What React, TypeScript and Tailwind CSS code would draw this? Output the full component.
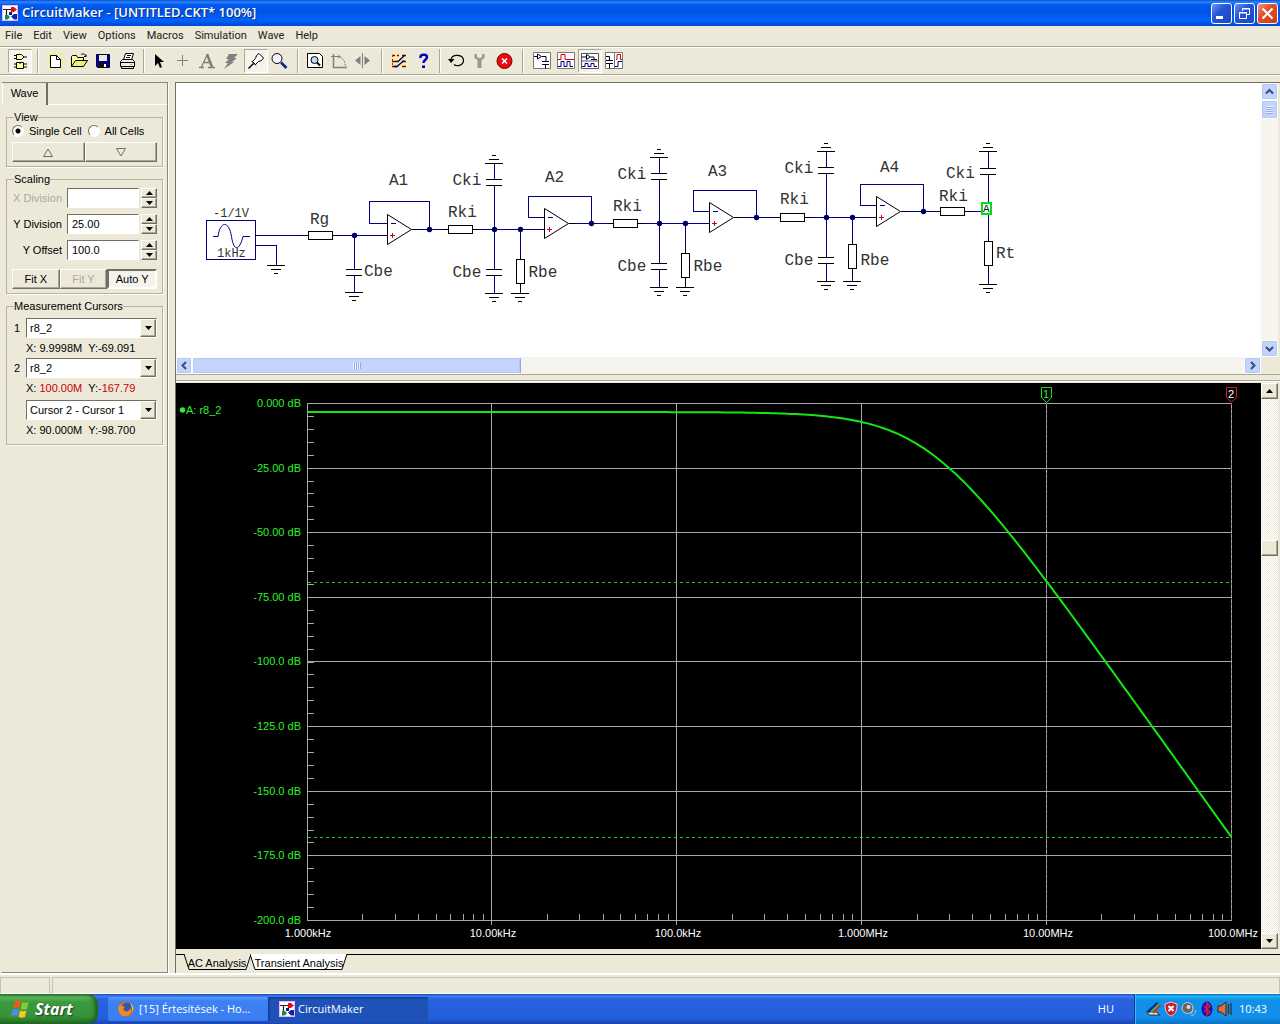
import type { ReactNode } from "react";

const SANS = "font-['Liberation_Sans',Arial,sans-serif]";
const raised = "border border-t-white border-l-white border-r-[#716f64] border-b-[#716f64] shadow-[inset_-1px_-1px_0_#aca899] bg-[#ece9d8]";
const sunken = "border border-t-[#716f64] border-l-[#716f64] border-r-white border-b-white";

const AppIcon = () => (
  <svg width="16" height="16" viewBox="0 0 16 16" className="shrink-0">
    <rect width="16" height="16" fill="#f8b0f0" />
    <rect x="1" y="1" width="14" height="14" fill="#fff" />
    <path d="M1 4.500H9M4.500 4V12M9.500 5V9" stroke="#222" strokeWidth="1.200" fill="none" />
    <path d="M9 2h3l3 2.500-3 2.500H9z" fill="#d81020" />
    <path d="M7 7h3v3H7z" fill="#102070" />
    <path d="M15 9h-3l-3 2.500 3 3h3z" fill="#1020b0" />
    <path d="M3 10h3l2 2-2 2.500H3z" fill="#109050" />
  </svg>
);

/* ---------- toolbar ---------- */

const Sep = ({ className = "w-3" }: { className?: string }) => (
  <div className={`${className} flex justify-center`}>
    <div className="h-6 w-[2px] border-l border-[#aca899] bg-white" />
  </div>
);

const Tool = ({ label, pressed, children }: { label: string; pressed?: boolean; children: ReactNode }) => (
  <button
    aria-label={label}
    className={`flex h-6 w-6 items-center justify-center ${pressed ? "border border-t-[#aca899] border-l-[#aca899] border-r-white border-b-white bg-[#f5f3ec]" : ""}`}
  >
    <svg width="18" height="18" viewBox="0 0 18 18" fill="none" stroke="#000" className="shrink-0">
      {children}
    </svg>
  </button>
);

const Toolbar = () => (
  <div className="flex h-7 items-center border-t border-[#aca899] pl-2 shadow-[inset_0_1px_0_#fff]">
    <Tool label="Parts" pressed>
      <path d="M5.500 2.500h5l2.500 2.500-2.500 2.500h-5zM3 3.500h2M3 6.500h2M13 5h3" fill="#ffffb0" />
      <path d="M5.500 10.500h7v6h-7zM3 12h2M3 15h2M13 12h3M13 15h3M8 10.500l1 1 1-1" fill="#ffff90" />
    </Tool>
    <Sep />
    <Tool label="New">
      <path d="M1 3l3 3M8 0v3M15 1l-3 3M0 9h3M15 11h3M2 16l2-2M14 15l2 2" stroke="#f6f25a" strokeWidth="2" />
      <path d="M3.500 3.500h6l4 4v8h-10z" fill="#fff" />
      <path d="M9.500 3.500v4h4" />
    </Tool>
    <Tool label="Open">
      <path d="M.5 14.500v-10l1-1h4l1 2h6v3" fill="#ffff99" />
      <path d="M.5 14.500l4-6h12l-4 6z" fill="#f0ec80" />
      <path d="M10 2.500c2-1 4-1 5 2m0 0v-2m0 2h-2" />
    </Tool>
    <Tool label="Save">
      <path d="M1.500 2.500h13v13h-12l-1-1z" fill="#000090" stroke="#00004a" />
      <path d="M4 3h8v6H4z" fill="#ece9d8" stroke="none" />
      <path d="M4 11h8v5H4z" fill="#111" stroke="none" />
      <path d="M9 12h2v3H9z" fill="#fff" stroke="none" />
    </Tool>
    <Tool label="Print">
      <path d="M4.500 8l2-6.500h8l-2 6.500" fill="#fff" />
      <path d="M8 3.500h4M7 5.500h4" />
      <path d="M1.500 9.500l2-2h10l2 2v5h-14z" fill="#f0f0ea" />
      <path d="M1.500 10.500h14M2.500 14.500h12v2h-12z" fill="#ddd" />
      <path d="M11 12.500h2" stroke="#d0c000" />
    </Tool>
    <Sep className="w-2" />
    <Tool label="Arrow">
      <path d="M4 2v12l3-3 2 5 2-1-2-5h4z" fill="#000" stroke="none" />
    </Tool>
    <Tool label="Wire">
      <path d="M7.500 3v11M2 8.500h11" stroke="#808080" />
    </Tool>
    <Tool label="Text">
      <path d="M0 15.500h5M9 15.500h7M2.500 15L8 3M5 10.500h6" stroke="#808080" strokeWidth="1.300" />
      <path d="M8 2l5 13" stroke="#808080" strokeWidth="2.600" />
    </Tool>
    <Tool label="Delete">
      <path d="M6 2h9l-4 4h3l-5 4h2L1 17l4-6H2l4-4H3z" fill="#808080" stroke="none" />
    </Tool>
    <Tool label="Probe" pressed>
      <path d="M1.500 16.500l5-5" strokeWidth="1.500" />
      <path d="M5.500 9.500l3-3 1-3 2.500-2 4.500 4.500-2 2.500-3 1-3 3z" fill="#fff" />
      <path d="M4.500 9l4.500 4.500" />
    </Tool>
    <Tool label="Zoom">
      <circle cx="6" cy="6.500" r="5" fill="#f4f4ff" />
      <path d="M10 10.500l5.500 5.500" stroke="#1020a0" strokeWidth="2.600" />
    </Tool>
    <Sep />
    <Tool label="Find">
      <path d="M.5 1.500h12l3 3v11H.5z" fill="#fff" />
      <circle cx="7.500" cy="8" r="3.500" fill="#bde" />
      <path d="M10 10.500l3 3" strokeWidth="2" />
    </Tool>
    <Tool label="Rotate">
      <path d="M2.500 2v13.500H16" stroke="#808080" strokeWidth="1.500" />
      <path d="M0 4.500h9l-2-2m2 2l-2 2" stroke="#808080" />
      <path d="M9 5c4 2 5 5 5.500 10" stroke="#808080" strokeDasharray="2 1" />
    </Tool>
    <Tool label="Mirror">
      <path d="M7.500 1v15" stroke="#808080" />
      <path d="M5.500 4v9L0 8.500zM9.500 4v9L15 8.500z" fill="#808080" stroke="none" />
    </Tool>
    <Sep />
    <Tool label="Digital options">
      <path d="M1 2h14v14H1z" fill="#f8f0a0" stroke="none" />
      <path d="M1 3.500h3M6 3.500h2M1 9.500h3M1 14.500h6M11 3.500h4M11 9.500h4M11 14.500h4" stroke="#900000" strokeWidth="1.600" />
      <path d="M1.500 3v12" stroke="#c02020" strokeDasharray="2 2" />
      <path d="M4 9.500h3l7-6.500M3 14.500h3l7-6" stroke="#000090" strokeWidth="1.400" />
    </Tool>
    <Tool label="Help">
      <path d="M5.500 6V4.500C6 2 12 2 12 5c0 3-3.500 2.500-3.500 6" stroke="#0000c0" strokeWidth="2.400" />
      <path d="M7 13.500h3v2.500H7z" fill="#0000c0" stroke="none" />
    </Tool>
    <Sep className="w-2" />
    <Tool label="Reset">
      <path d="M4 7.500c1-6 12.500-5.500 12.500 1 0 5-7 6.500-9.500 4" strokeWidth="1.200" />
      <path d="M1 7h6.500L4 11z" fill="#000" stroke="none" />
    </Tool>
    <Tool label="Step">
      <path d="M3.500 2v4l3 2v8h4V8l3-2V2h-2.500v3l-1.500 1H8L6 5V2z" fill="#9a9888" stroke="none" />
    </Tool>
    <Tool label="Stop">
      <circle cx="9.500" cy="9" r="7.500" fill="#e80c10" stroke="#700" />
      <path d="M7 6.500l5 5m0-5l-5 5" stroke="#fff" strokeWidth="1.600" />
    </Tool>
    <Sep className="w-[14px]" />
    <Tool label="Schematic view">
      <path d="M.5 .5h17v16H.5z" fill="#fff" stroke="#777" />
      <path d="M1 4.500h3M4.500 2v5l4-2.500zM9 4.500h4v5M9 9.500h7M9 12.500h7M12.500 12.500v4" stroke="#002" />
    </Tool>
    <Tool label="Wave view">
      <path d="M.5 .5h17v16H.5z" fill="#fff" stroke="#777" />
      <path d="M1 7.500h3v-5h4v5h9" stroke="#d00000" />
      <path d="M1 14.500h3v-5h3v5h3v-5h3v5h3" stroke="#000080" />
    </Tool>
    <Tool label="Split horizontal" pressed>
      <path d="M.5 1.500h17v15H.5zM.5 9h17" fill="#fff" stroke="#555" />
      <path d="M1 5h4M5.500 2.500v5l4-2.500zM10 5h3v2M10 7.500h6" stroke="#002" />
      <path d="M1 14.500h3v-3h3v3h3v-3h3v3h3" stroke="#000080" />
    </Tool>
    <Tool label="Split vertical">
      <path d="M.5 .5h17v16H.5zM9.500 1v16" fill="#fff" stroke="#777" />
      <path d="M1 4.500h3.500v4M1 8.500h7M1 11.500h7M4.500 11.500v5" stroke="#002" />
      <path d="M11 7.500h1v-5h3.500v5h1.500" stroke="#d00000" />
      <path d="M10 14.500h3v-5h4" stroke="#000080" />
    </Tool>
  </div>
);

/* ---------- left panel ---------- */

const Group = ({ title, children }: { title: string; children: ReactNode }) => (
  <fieldset className="min-w-0 border border-[#b5b2a2] px-[5px] pb-1 shadow-[1px_1px_0_#fff]">
    <legend className="ml-[2px] text-[11px] leading-3">{title}</legend>
    {children}
  </fieldset>
);

const Spin = ({ id, label, value, disabled }: { id: string; label: string; value: string; disabled?: boolean }) => (
  <div className="flex h-[26px] items-center">
    <label htmlFor={id} className={`w-[50px] shrink-0 whitespace-nowrap text-right ${disabled ? "text-[#aca899]" : ""}`}>
      {label}
    </label>
    <input id={id} defaultValue={value} disabled={disabled} className={`ml-[5px] h-5 w-0 flex-1 bg-white px-1 ${sunken}`} />
    <div className="ml-[2px] flex h-5 w-4 flex-col">
      <button aria-label={`${label} up`} className={`flex flex-1 items-center justify-center ${raised}`}>
        <svg width="7" height="4"><path d="M0 4L3.500 0 7 4z" /></svg>
      </button>
      <button aria-label={`${label} down`} className={`flex flex-1 items-center justify-center ${raised}`}>
        <svg width="7" height="4"><path d="M0 0L3.500 4 7 0z" /></svg>
      </button>
    </div>
  </div>
);

const Combo = ({ n, value, children }: { n: string; value: string; children: ReactNode }) => (
  <div className="flex">
    <label htmlFor={`cursor${n}`} className="w-[14px] shrink-0 pl-[2px] leading-5">{n}</label>
    <div className="min-w-0 flex-1">
      <div className="relative">
        <select
          id={`cursor${n}`}
          aria-label={n ? undefined : "Difference"}
          className={`block h-5 w-full appearance-none bg-white pl-[3px] text-[11px] ${sunken}`}
        >
          <option>{value}</option>
        </select>
        <span className={`pointer-events-none absolute top-[1px] right-[1px] flex h-[18px] w-4 items-center justify-center ${raised}`}>
          <svg width="7" height="4"><path d="M0 0L3.500 4 7 0z" /></svg>
        </span>
      </div>
      <div className="h-5 whitespace-pre leading-5">{children}</div>
    </div>
  </div>
);

const btn = `h-5 flex-1 ${raised}`;

const SidePanel = () => (
  <aside className="ml-[2px] flex w-[166px] shrink-0 flex-col border-t border-r border-b border-[#8b8878] text-[11px] leading-3 shadow-[1px_1px_0_#fff]">
    <div className="flex h-[22px]">
      <button className="w-[46px] border-r-2 border-[#716f64] border-l border-l-white pb-[2px]">Wave</button>
      <div className="flex-1 border-b border-white" />
    </div>
    <div className="flex flex-col gap-[6px] px-1 pt-[6px]">
      <Group title="View">
        <div className="flex h-4 items-center gap-[6px] whitespace-nowrap">
          {["Single Cell", "All Cells"].map((t, i) => (
            <label key={t} className="flex items-center gap-[5px]">
              <input
                type="radio"
                name="view"
                defaultChecked={i === 0}
                className="h-3 w-3 appearance-none rounded-full border border-t-[#716f64] border-l-[#716f64] border-r-white border-b-white bg-white checked:bg-[radial-gradient(circle,#000_2px,#fff_3px)]"
              />
              {t}
            </label>
          ))}
        </div>
        <div className="mt-[3px] flex">
          <button aria-label="Previous cell" className={`flex items-center justify-center ${btn}`}>
            <svg width="10" height="9" fill="none" stroke="#716f64"><path d="M.5 8.500h9L5 1z" /></svg>
          </button>
          <button aria-label="Next cell" className={`flex items-center justify-center ${btn}`}>
            <svg width="10" height="9" fill="none" stroke="#716f64"><path d="M.5.5h9L5 8z" /></svg>
          </button>
        </div>
      </Group>
      <Group title="Scaling">
        <Spin id="xdiv" label="X Division" value="" disabled />
        <Spin id="ydiv" label="Y Division" value="25.00" />
        <Spin id="yoff" label="Y Offset" value="100.0" />
        <div className="mt-[6px] flex">
          <button className={btn}>Fit X</button>
          <button disabled className={`text-[#aca899] ${btn}`}>Fit Y</button>
          <button className="h-5 flex-1 border-2 border-t-[#716f64] border-l-[#716f64] border-r-white border-b-white bg-[#f5f3ec]">Auto Y</button>
        </div>
      </Group>
      <Group title="Measurement Cursors">
        <div className="pt-[6px]">
          <Combo n="1" value="r8_2">X: 9.9998M  Y:-69.091</Combo>
          <Combo n="2" value="r8_2">
            X: <span className="text-[#c8000a]">100.00M</span>  Y:<span className="text-[#c8000a]">-167.79</span>
          </Combo>
          <div className="pt-[2px]">
            <Combo n="" value="Cursor 2 - Cursor 1">X: 90.000M  Y:-98.700</Combo>
          </div>
        </div>
      </Group>
    </div>
  </aside>
);

/* ---------- schematic ---------- */

const WIRE = "#000080";

// Ground symbol, dir = 1 points down, -1 points up
const Ground = ({ x, y, dir = 1 }: { x: number; y: number; dir?: number }) => (
  <path d={`M${x - 9.5} ${y}h18M${x - 5.5} ${y + 4 * dir}h10M${x - 2.5} ${y + 8 * dir}h4`} stroke="#000" />
);

const Plates = ({ x, y }: { x: number; y: number }) => (
  <>
    <rect x={x - 2} y={y} width="4" height="6" fill="#fff" stroke="none" />
    <path d={`M${x - 8.5} ${y}h16M${x - 8.5} ${y + 6}h16`} stroke="#000" />
  </>
);

const ResH = ({ x, y }: { x: number; y: number }) => (
  <path d={`M${x - 6} ${y}h6m24 0h6M${x} ${y - 4}h24v8h-24z`} fill="#fff" stroke="#000" />
);

const ResV = ({ x, y }: { x: number; y: number }) => (
  <path d={`M${x} ${y - 5}v5m0 24v6M${x - 4} ${y}h8v24h-8z`} fill="#fff" stroke="#000" />
);

const Dot = ({ x, y }: { x: number; y: number }) => (
  <circle cx={x} cy={y} r="2.700" fill="#000060" stroke="none" shapeRendering="auto" />
);

const Label = ({ x, y, small, children }: { x: number; y: number; small?: boolean; children: string }) => (
  <text x={x} y={y} fontSize={small ? 12 : 16} fill="#333" stroke="none">{children}</text>
);

type OpAmpProps = { x: number; y: number; left: number; right: number; name: string; nx: number; ny: number };

// x is the left side of the triangle, y the non inverting input
const OpAmp = ({ x, y, left, right, name, nx, ny }: OpAmpProps) => {
  const top = name === "A1" ? y - 34 : y - 33;
  return (
    <>
      <path d={`M${x} ${y - 12}H${left}V${top}H${right}V${y - 6}`} stroke={WIRE} />
      <path d={`M${x} ${y - 21}v30l24 -15z`} fill="#fff" stroke="#000" shapeRendering="auto" />
      <path d={`M${x + 24} ${y - 6}h6`} stroke="#000" />
      <path d={`M${x + 3} ${y - 12}h5`} stroke={WIRE} />
      <path d={`M${x + 2.5} ${y}h5M${x + 5} ${y - 2.5}v5`} stroke="#d00020" />
      <Dot x={right} y={y - 6} />
      <Label x={nx} y={ny}>{name}</Label>
    </>
  );
};

const BusNode = ({ x, y }: { x: number; y: number }) => (
  <>
    <path d={`M${x} ${y - 66}V${y + 64}M${x + 26} ${y}v64`} stroke={WIRE} />
    <Plates x={x} y={y - 50} />
    <Plates x={x} y={y + 40} />
    <Ground x={x} y={y - 66} dir={-1} />
    <Ground x={x} y={y + 64} />
    <ResV x={x + 26} y={y === 217.5 ? y + 27 : y + 30} />
    <Ground x={x + 26} y={y + 64} />
    <Dot x={x} y={y} />
    <Dot x={x + 26} y={y} />
    <Label x={x - 42} y={y - 45}>Cki</Label>
    <Label x={x - 42} y={y + 47}>Cbe</Label>
    <Label x={x + 34} y={y + 47}>Rbe</Label>
  </>
);

const Schematic = () => (
  <svg width="1085" height="274" viewBox="176 83 1085 274" fill="none" shapeRendering="crispEdges" className="shrink-0 font-['Liberation_Mono',monospace]">
    <rect x="206.500" y="220.500" width="49" height="39" stroke={WIRE} />
    <path d="M213 236.500h5c2-16 11-16 13.500 0s8 14 11.500 0h7" stroke={WIRE} shapeRendering="auto" />
    <Label x={213} y={217} small>-1/1V</Label>
    <Label x={217} y={257} small>1kHz</Label>
    <path d="M256 235.500H387M256 245.500h20.500v20M354.500 235.500v57" stroke={WIRE} />
    <path d="M412 229.500H544M569 223.500H709M734 217.500H876M901 211.500H982M988.500 151.500v133" stroke={WIRE} />
    <Ground x={276.5} y={265.5} />
    <ResH x={308.5} y={235.5} />
    <Label x={310} y={224}>Rg</Label>
    <Plates x={354.5} y={269.5} />
    <Ground x={354.5} y={292.5} />
    <Dot x={354.5} y={235.5} />
    <Label x={364} y={276}>Cbe</Label>

    <OpAmp x={387.5} y={235.5} left={369.5} right={429.5} name="A1" nx={389} ny={185} />
    <ResH x={448.5} y={229.5} />
    <Label x={448} y={217}>Rki</Label>
    <BusNode x={494.5} y={229.5} />

    <OpAmp x={544.5} y={229.5} left={528.5} right={591.5} name="A2" nx={545} ny={182} />
    <ResH x={613.5} y={223.5} />
    <Label x={613} y={211}>Rki</Label>
    <BusNode x={659.5} y={223.5} />

    <OpAmp x={709.5} y={223.5} left={693.5} right={756.5} name="A3" nx={708} ny={176} />
    <ResH x={780.5} y={217.5} />
    <Label x={780} y={204}>Rki</Label>
    <BusNode x={826.5} y={217.5} />

    <OpAmp x={876.5} y={217.5} left={860.5} right={923.5} name="A4" nx={880} ny={172} />
    <ResH x={940.5} y={211.5} />
    <Label x={939} y={201}>Rki</Label>

    <Ground x={988.5} y={151.5} dir={-1} />
    <Plates x={988.5} y={168.5} />
    <ResV x={988.5} y={241.5} />
    <Ground x={988.5} y={284.5} />
    <Label x={946} y={178}>Cki</Label>
    <Label x={996} y={258}>Rt</Label>
    <rect x="982" y="203" width="9" height="11" fill="#fff" stroke="#00e010" strokeWidth="2" />
    <text x="983" y="212" fontSize="11" fill="#111">A</text>
  </svg>
);

/* ---------- AC plot ---------- */

const X0 = 307.5;
const DEC = 184.8;
const Y0 = 403.5;
const PX_PER_DB = 517 / 200;

// centre of the pixel that holds v
const snap = (v: number) => Math.floor(v) + 0.5;

const curve = Array.from({ length: 232 }, (_, i) => {
  const x = i * 4;
  const f = Math.pow(10, 3 + x / DEC);
  const db = 3.3 + 50 * Math.log10(1 + Math.pow(f / 2.265e6, 2));
  return `${X0 + x},${(Y0 + db * PX_PER_DB).toFixed(2)}`;
}).join(" ");

const dbLabels = ["0.000 dB", "-25.00 dB", "-50.00 dB", "-75.00 dB", "-100.0 dB", "-125.0 dB", "-150.0 dB", "-175.0 dB", "-200.0 dB"];
const freqLabels = ["1.000kHz", "10.00kHz", "100.0kHz", "1.000MHz", "10.00MHz", "100.0MHz"];

const Plot = () => (
  <svg viewBox="176 383 1085 566" fontSize="11" className="h-full w-full">
    <g stroke="#a8a8a8" shapeRendering="crispEdges">
      {dbLabels.map((t, i) => <path key={t} d={`M307 ${snap(Y0 + i * 64.6)}H1232`} />)}
      {freqLabels.map((t, i) => (
        <path key={t} d={`M${snap(307 + i * DEC)} 403V${i > 0 && i < 5 ? 925 : 921}`} />
      ))}
      {Array.from({ length: 40 }, (_, i) => (
        <path key={i} d={`M308 ${snap(Y0 + i * 12.925)}h6`} />
      ))}
      {[0, 1, 2, 3, 4].flatMap((d) =>
        [2, 3, 4, 5, 6, 7, 8, 9].map((m) => (
          <path key={`${d}-${m}`} d={`M${snap(307 + (d + Math.log10(m)) * DEC)} 914v6`} />
        )),
      )}
    </g>
    <path d="M1046.500 403V920M1231.500 403V920" stroke="#8a6a80" strokeDasharray="2 3" shapeRendering="crispEdges" />
    <path d="M308 582.500H1231" stroke="#22cc22" strokeDasharray="3 3" shapeRendering="crispEdges" />
    <path d="M308 837.500H1231" stroke="#22cc22" strokeDasharray="3 3" shapeRendering="crispEdges" />
    <polyline points={curve} fill="none" stroke="#12e812" strokeWidth="2" />
    <path d="M1041.500 387.500h10v10l-5 5-5-5z" stroke="#20d820" fill="#000" />
    <path d="M1226.500 387.500h10v10l-5 5-5-5z" stroke="#e01030" fill="#000" />
    <text x="1046" y="398" textAnchor="middle" fill="#30f030">1</text>
    <text x="1231" y="398" textAnchor="middle" fill="#fff">2</text>
    <g fill="#2cf02c">
      <circle cx="182.500" cy="410" r="2.700" />
      <text x="186" y="414">A: r8_2</text>
      {dbLabels.map((t, i) => (
        <text key={t} x="301" y={407 + Math.round(i * 64.6)} textAnchor="end">{t}</text>
      ))}
    </g>
    <g fill="#fff">
      {freqLabels.map((t, i) => (
        <text key={t} x={308 + i * 185} y="937" textAnchor="middle">{t}</text>
      ))}
    </g>
  </svg>
);

/* ---------- scroll bars ---------- */

const lunaBtn = "flex shrink-0 items-center justify-center rounded-[2px] border border-white bg-[#c3d3fb] shadow-[inset_0_0_0_1px_#b4c8f6]";

const Chevron = ({ d }: { d: string }) => (
  <svg width="9" height="9" fill="none" stroke="#33507c" strokeWidth="2"><path d={d} /></svg>
);

const checker = "bg-[repeating-conic-gradient(#fff_0_25%,#ece9d8_0_50%)] bg-[length:2px_2px]";

const Views = () => (
  <main className="ml-[7px] flex min-w-0 flex-1 flex-col border-t border-l border-[#716f64]">
    <div className="flex h-[274px] bg-white">
      <div className="min-w-0 flex-1 overflow-hidden"><Schematic /></div>
      <div className="flex w-[17px] flex-col bg-[#f5f4ee]">
        <button aria-label="Scroll up" className={`h-[17px] ${lunaBtn}`}><Chevron d="M1 6.500L4.500 3 8 6.500" /></button>
        <div className={`h-[19px] flex-col gap-[1px] ${lunaBtn}`}>
          {[0, 1, 2, 3].map((i) => <i key={i} className="h-[1px] w-[7px] bg-[#eef3ff] shadow-[0_1px_0_#8fabe4]" />)}
        </div>
        <div className="flex-1" />
        <button aria-label="Scroll down" className={`h-[17px] ${lunaBtn}`}><Chevron d="M1 3L4.500 6.500 8 3" /></button>
      </div>
      <div className="w-[2px] bg-[#ece9d8]" />
    </div>
    <div className="flex h-[17px]">
      <div className="flex flex-1 bg-[#f5f4ee]">
        <button aria-label="Scroll left" className={`w-4 ${lunaBtn}`}><Chevron d="M6 1L2.500 4.500 6 8" /></button>
        <div className={`w-[329px] gap-[1px] border-r-[#8fabe4] ${lunaBtn}`}>
          {[0, 1, 2, 3].map((i) => <i key={i} className="h-[7px] w-[1px] bg-[#eef3ff] shadow-[1px_0_0_#8fabe4]" />)}
        </div>
        <div className="flex-1" />
        <button aria-label="Scroll right" className={`w-[17px] ${lunaBtn}`}><Chevron d="M3 1l3.500 3.500L3 8" /></button>
      </div>
      <div className="w-[19px]" />
    </div>
    <div className="h-[9px] border-t border-[#aca899]">
      <div className="mt-[5px] h-[2px] border-t border-[#aca899] bg-white" />
    </div>
    <div className={`flex min-h-0 flex-1 ${SANS}`}>
      <div className="min-h-0 min-w-0 flex-1 bg-black"><Plot /></div>
      <div className={`flex w-[17px] flex-col ${checker}`}>
        <button aria-label="Plot up" className={`flex h-4 items-center justify-center ${raised}`}>
          <svg width="7" height="4"><path d="M0 4L3.500 0 7 4z" /></svg>
        </button>
        <div className="h-[141px]" />
        <div className={`h-4 ${raised}`} />
        <div className="flex-1" />
        <button aria-label="Plot down" className={`flex h-4 items-center justify-center ${raised}`}>
          <svg width="7" height="4"><path d="M0 0L3.500 4 7 0z" /></svg>
        </button>
      </div>
      <div className="w-[2px]" />
    </div>
    <div className="h-6 pt-[5px]">
      <div className="flex h-4 border-t border-black pl-2 text-[11px] leading-4">
        <button className="relative h-4 w-[66px]">
          <svg width="68" height="17" className="absolute -top-px left-0"><path d="M0 0l5 15.500h57L67 0" fill="#ece9d8" stroke="#000" /></svg>
          <span className="relative">AC Analysis</span>
        </button>
        <button className="relative h-4 w-[98px]">
          <svg width="98" height="17" className="absolute -top-px left-0"><path d="M0 0l5 15.500h87L97 0" fill="#fff" stroke="#000" /></svg>
          <span className="relative whitespace-nowrap">Transient Analysis</span>
        </button>
      </div>
    </div>
  </main>
);

/* ---------- taskbar ---------- */

const Taskbar = () => (
  <footer className="flex h-[30px] shrink-0 items-center bg-[linear-gradient(#1941a5_0,#3a80f3_2px,#2a62e0_5px,#245edb_24px,#1b45b0)] font-['Open_Sans','Noto_Sans',sans-serif] text-[11px] text-white">
    <button className="flex h-full w-[98px] items-center gap-[5px] rounded-r-[10px] bg-[linear-gradient(#2c7a2c,#5cb85c_3px,#3c9a3c_8px,#37933a_22px,#236b23)] pl-[10px] shadow-[inset_-3px_0_4px_#1d5c1d]">
      <svg width="20" height="18" viewBox="0 0 18 18">
        <path d="M4 1c2-1 4-1 6 0L8.500 8C6.500 7 4 7 2 8z" fill="#f0581c" />
        <path d="M11 2c2 1 4 1 6.500 0L16 9c-2 1-4.500 1-6.500 0z" fill="#86c83c" />
        <path d="M1.500 9.500c2-1 4.500-1 6.500 0L6.500 16c-2-1-4.500-1-6.500 0z" fill="#4a8cf0" />
        <path d="M9 10.500c2 1 4.500 1 6.500 0L14 17c-2 1-4.500 1-6.500 0z" fill="#fcc820" />
      </svg>
      <span className="text-base font-bold italic [text-shadow:1px_1px_2px_#123c12]">Start</span>
    </button>
    <button className="ml-[10px] flex h-6 w-[160px] items-center gap-[5px] rounded-[2px] bg-[linear-gradient(#5a9bff,#3c81f3_4px,#3a7df0)] pl-[10px] text-left">
      <svg width="16" height="16" viewBox="0 0 16 16" className="shrink-0">
        <circle cx="8" cy="8" r="7.500" fill="#e8641a" />
        <circle cx="9" cy="6.500" r="5" fill="#2a5cae" />
        <path d="M1 4c2 0 3 1 6 2-2 1-2 3 0 4 2 1 4 0 6-3 1 6-3 8-6 8-5 0-8-5-6-11z" fill="#f08a20" />
        <path d="M12 2c3 2 4 5 3 9-1-2-1-6-3-9z" fill="#fcc430" />
      </svg>
      <span className="whitespace-nowrap">[15] Értesítések - Ho...</span>
    </button>
    <button className="flex h-6 w-[160px] items-center gap-[3px] rounded-[2px] bg-[#1e52b7] pl-[11px] shadow-[inset_1px_1px_2px_#0f3585]">
      <AppIcon />
      <span>CircuitMaker</span>
    </button>
    <span className="ml-auto pr-5">HU</span>
    <div className="flex h-full w-[146px] items-center gap-[2px] border-l border-[#0a3a98] bg-[linear-gradient(#0c59b9_0,#19b9f3_2px,#1290e8_6px,#108ee9_24px,#0d70c0)] pl-[10px] shadow-[inset_1px_0_0_#3ab8f8]">
      <svg width="16" height="16" viewBox="0 0 16 16">
        <path d="M1 11h10l4 3H5z" fill="#eee" stroke="#333" />
        <path d="M3 11L13 2" stroke="#0020a0" strokeWidth="3" />
        <path d="M8 12l7-8" stroke="#e02020" strokeWidth="2" />
        <path d="M6 11l8-8" stroke="#30c040" strokeWidth="2" />
      </svg>
      <svg width="16" height="16" viewBox="0 0 16 16">
        <path d="M8 1l6 2c0 6-1 10-6 12C3 13 2 9 2 3z" fill="#c81c2c" stroke="#e8c8c8" />
        <path d="M5.500 5l5 5m0-5l-5 5" stroke="#fff" strokeWidth="2" />
      </svg>
      <svg width="16" height="16" viewBox="0 0 16 16">
        <circle cx="6.500" cy="7" r="5.500" fill="#666" stroke="#ccc" />
        <circle cx="7.500" cy="6" r="2" fill="#ddd" />
        <path d="M10 15c3-1 5-3 5-6M9 13c2-1 3-2 3-4" stroke="#9ac8f0" fill="none" />
      </svg>
      <svg width="16" height="16" viewBox="0 0 16 16">
        <ellipse cx="8" cy="8" rx="5.500" ry="7.500" fill="#0a14b8" />
        <path d="M5 5l6 6-3 3V2l3 3-6 6" stroke="#e01838" fill="none" strokeWidth="1.500" />
      </svg>
      <svg width="16" height="16" viewBox="0 0 16 16">
        <path d="M1 5h3l5-4v14l-5-4H1z" fill="#d87040" stroke="#402018" />
        <path d="M11.500 3v10M14 2v12" stroke="#333" strokeWidth="1.300" />
      </svg>
      <span className="pl-1">10:43</span>
    </div>
  </footer>
);

const menus = ["File", "Edit", "View", "Options", "Macros", "Simulation", "Wave", "Help"];

const winBtn = "flex h-[21px] w-[21px] items-center justify-center rounded-[3px] border border-white";
const winBlue = "bg-[linear-gradient(135deg,#6c94f4,#2456d8_40%,#1c48c4)]";

export default function App() {
  return (
    <div className={`flex h-screen flex-col overflow-hidden bg-[#ece9d8] text-black ${SANS}`}>
      <header className="flex h-[26px] shrink-0 items-center bg-[linear-gradient(#0a4fd0_0,#2a86ff_2px,#0058ee_5px,#0054e4_12px,#0062fc_20px,#0048d0)] pl-[2px] pr-[2px]">
        <AppIcon />
        <h1 className="ml-1 font-['Open_Sans','Noto_Sans',sans-serif] text-[13px] font-semibold text-white [text-shadow:1px_1px_0_#0a2a80]">
          CircuitMaker - [UNTITLED.CKT* 100%]
        </h1>
        <div className="ml-auto flex gap-[2px]">
          <button aria-label="Minimize" className={`${winBtn} ${winBlue}`}>
            <svg width="13" height="13"><path d="M1 9h7v3H1z" fill="#fff" /></svg>
          </button>
          <button aria-label="Restore" className={`${winBtn} ${winBlue}`}>
            <svg width="13" height="13" fill="none" stroke="#fff"><path d="M4.500 4V1.500h7v6H9M4 2h8M1.500 5.500h7v6h-7zM1 6h8" /></svg>
          </button>
          <button aria-label="Close" className={`${winBtn} bg-[linear-gradient(135deg,#f09a80,#e0502c_40%,#c83c14)]`}>
            <svg width="13" height="13" stroke="#fff" strokeWidth="2"><path d="M1.500 1.500l10 10m0-10l-10 10" /></svg>
          </button>
        </div>
      </header>
      <nav className="flex h-5 shrink-0 items-center gap-[11px] pl-[5px] font-[Roboto,'Noto_Sans',sans-serif] text-[11px] leading-4 text-[#222]">
        {menus.map((m) => <button key={m}>{m}</button>)}
      </nav>
      <Toolbar />
      <div className="h-2 shrink-0 border-t border-[#aca899] shadow-[inset_0_1px_0_#fff]" />
      <div className="flex min-h-0 flex-1">
        <SidePanel />
        <Views />
      </div>
      <div className="flex h-[21px] shrink-0 gap-[2px] border-t-2 border-white pt-[2px]">
        <div className="w-[50px] border border-[#c5c2b2] border-b-white" />
        <div className="flex-1 border border-[#c5c2b2] border-b-white" />
      </div>
      <Taskbar />
    </div>
  );
}
